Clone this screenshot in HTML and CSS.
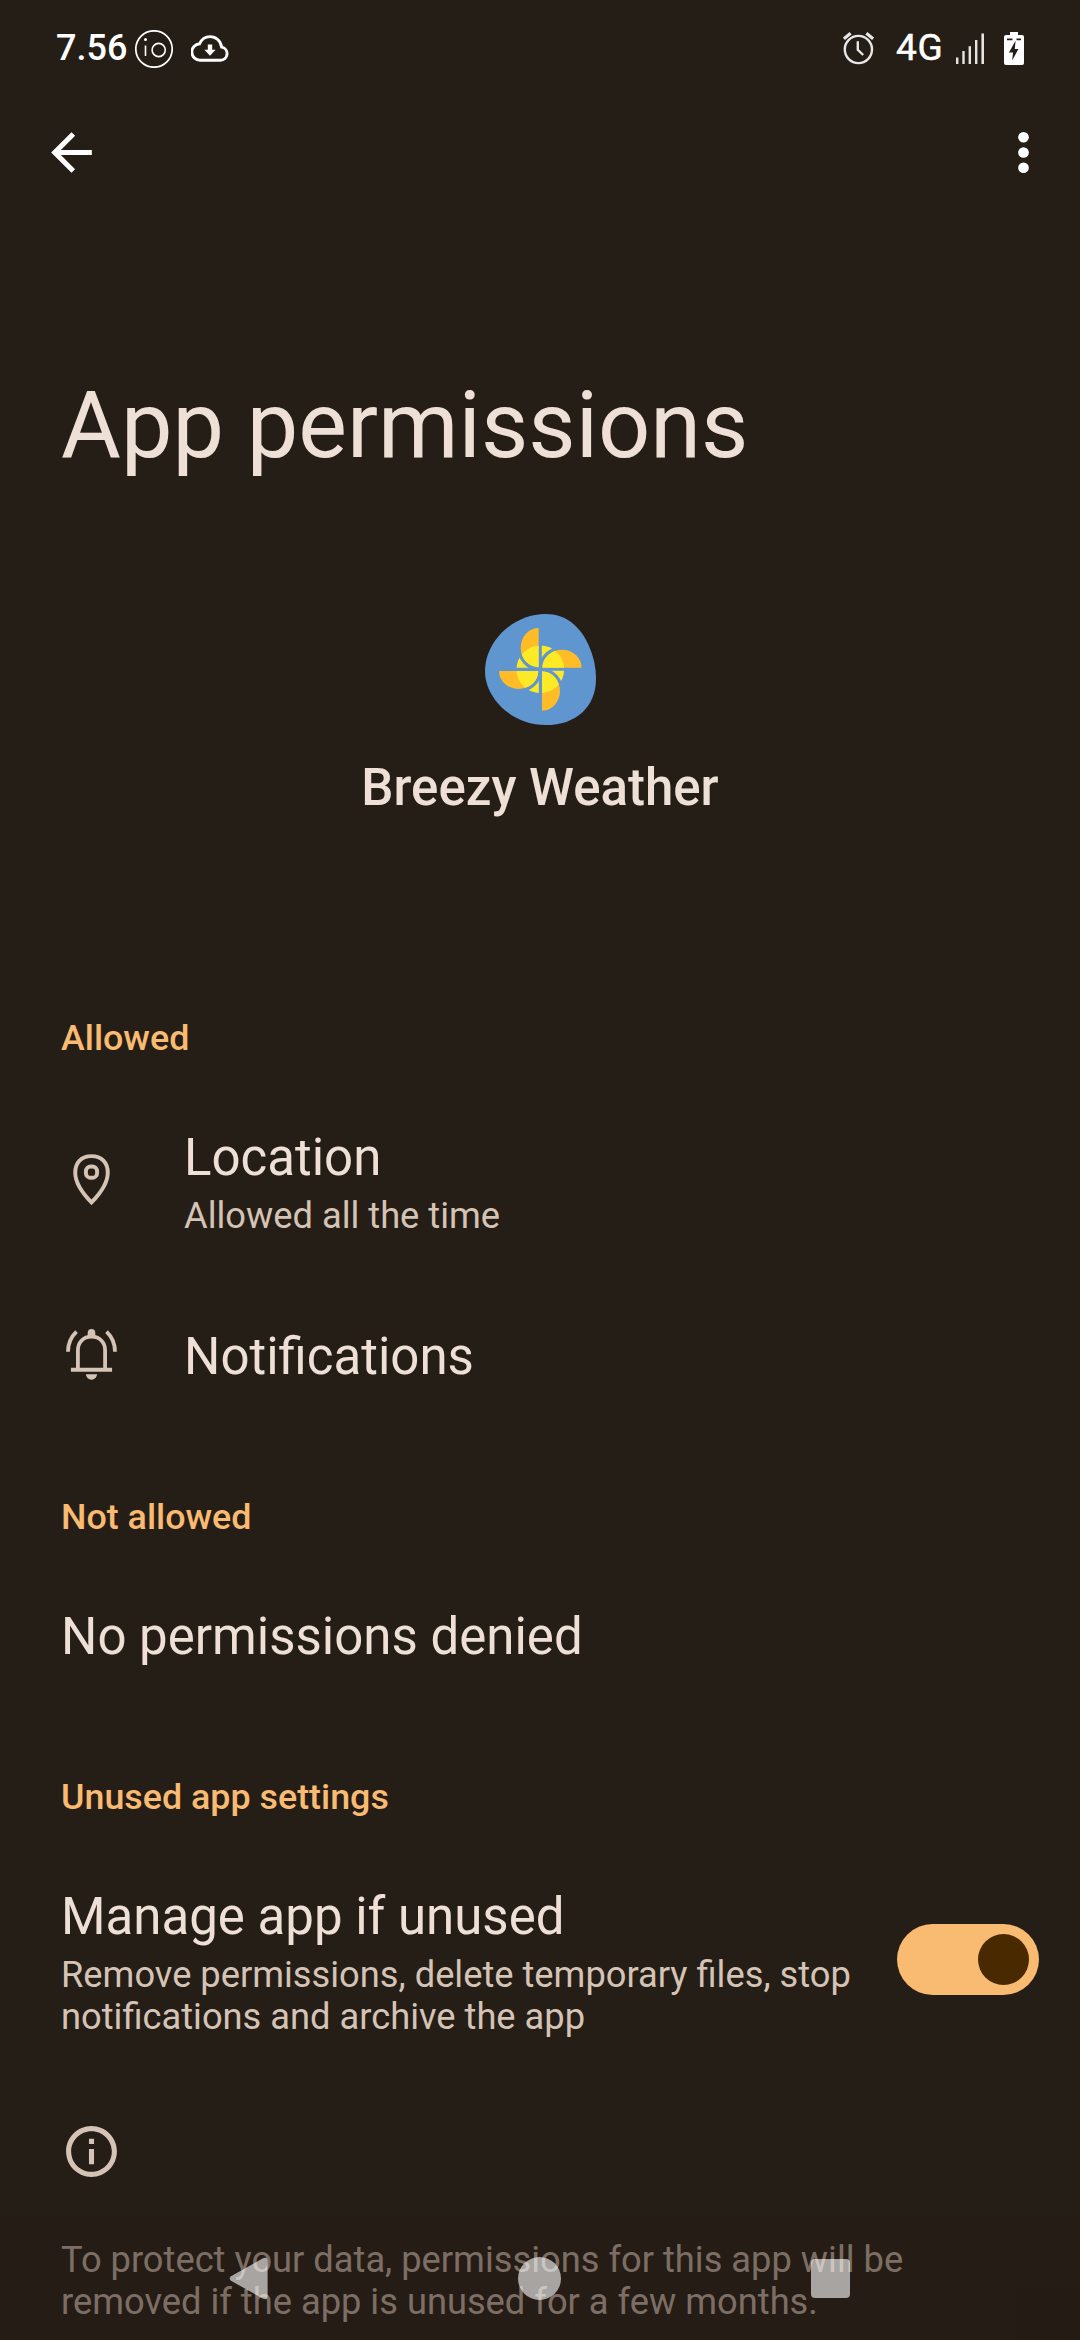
FILE: index.html
```html
<!DOCTYPE html>
<html lang="en">
<head>
    <meta charset="UTF-8">
    <meta name="viewport" content="width=device-width, initial-scale=1.0">
    <title>App permissions</title>
    <link rel="stylesheet" href="styles.css">
</head>
<body>
    <div class="screen">
        <header class="status-bar">
            <div class="status-left">
                <span class="clock">7.56</span>
                <svg class="io-icon" viewBox="0 0 38 38" fill="none" stroke="#fff">
                    <circle cx="19" cy="19" r="18.2" stroke-width="1.7"/>
                    <circle cx="23.7" cy="20" r="6.6" stroke-width="1.6"/>
                    <path d="M10.5 15.5v10.5" stroke-width="1.6"/>
                    <circle cx="10.5" cy="9.6" r="1.5" fill="#fff" stroke="none"/>
                </svg>
                <svg class="cloud-icon" viewBox="0 0 38 27" fill="none" stroke="#fff" stroke-width="2.9">
                    <path d="M9.5 25.2H29.5A6.6 6.6 0 0 0 30.6 12.1C29.8 5.8 24.9 1.6 19 1.6C14.2 1.6 10.5 4.3 8.6 8.8A8.2 8.2 0 0 0 9.5 25.2Z"/>
                    <path d="M16.8 9.5h4.4v5.3h3.4L19 20.8l-5.6-6h3.4z" fill="#fff" stroke="none"/>
                </svg>
            </div>
            <div class="status-right">
                <svg class="alarm-icon" viewBox="0 0 31 33" fill="none" stroke="#e9e7e5">
                    <circle cx="15.4" cy="17.5" r="13.6" stroke-width="2.4"/>
                    <path d="M14.8 9.2v8.6l5.4 5.2" stroke-width="2.4"/>
                    <path d="M0.9 6.8L7.6 1.3M23.4 1.3l6.7 5.5" stroke-width="3.2"/>
                </svg>
                <span class="network">4G</span>
                <svg class="signal-icon" viewBox="0 0 28 31" fill="#e6e3e1">
                    <rect x="0" y="24.5" width="2.4" height="6.5"/>
                    <rect x="6.3" y="18" width="2.4" height="13"/>
                    <rect x="12.6" y="13.2" width="2.4" height="17.8"/>
                    <rect x="19" y="7" width="2.4" height="24"/>
                    <rect x="25.4" y="0.5" width="2.6" height="30.5"/>
                </svg>
                <svg class="battery-icon" viewBox="0 0 20 33">
                    <path d="M6 0h8v3h4a2 2 0 0 1 2 2v26a2 2 0 0 1-2 2H2a2 2 0 0 1-2-2V5a2 2 0 0 1 2-2h4z" fill="#fff"/>
                    <path d="M11.6 8.5L5 20.5h4L8.2 28.5L14.4 17h-3.6zM3 6.5h5.5v1.8H3zM12.5 6.5H17v1.8h-4.5z" fill="#251e17"/>
                </svg>
            </div>
        </header>

        <nav class="toolbar">
            <svg class="back-icon" viewBox="0 0 24 24" fill="#fff">
                <path d="M20 11H7.83l5.59-5.59L12 4l-8 8 8 8 1.41-1.41L7.83 13H20z"/>
            </svg>
            <svg class="more-icon" viewBox="0 0 24 24" fill="#fff">
                <circle cx="12" cy="6" r="2.1"/>
                <circle cx="12" cy="12" r="2.1"/>
                <circle cx="12" cy="18" r="2.1"/>
            </svg>
        </nav>

        <main class="content">
            <h1 class="page-title">App permissions</h1>

            <section class="app-header">
                <svg class="app-logo" viewBox="72 72 333 333">
                    <defs>
                        <path id="blade" d="M233 114A54 59 0 0 0 233 232Z"/>
                        <clipPath id="blades-clip">
                            <use href="#blade"/>
                            <use href="#blade" transform="rotate(90 238 238)"/>
                            <use href="#blade" transform="rotate(180 238 238)"/>
                            <use href="#blade" transform="rotate(270 238 238)"/>
                        </clipPath>
                    </defs>
                    <path fill="#6096d0" d="M253 72C317 72 358 110 384 168C398 200 405 232 405 266C405 352 343 405 255 405C152 405 72 325 72 243C72 153 158 72 253 72Z"/>
                    <circle cx="238" cy="238" r="71.5" fill="#fcea27"/>
                    <g fill="#6096d0" stroke="#6096d0" stroke-width="19">
                        <use href="#blade"/>
                        <use href="#blade" transform="rotate(90 238 238)"/>
                        <use href="#blade" transform="rotate(180 238 238)"/>
                        <use href="#blade" transform="rotate(270 238 238)"/>
                    </g>
                    <g clip-path="url(#blades-clip)">
                        <rect x="100" y="100" width="276" height="276" fill="#ffbc26"/>
                        <circle cx="238" cy="238" r="71.5" fill="#fcea27"/>
                    </g>
                </svg>
                <div class="app-name">Breezy Weather</div>
            </section>

            <h2 class="section-title">Allowed</h2>
            <div class="row">
                <svg class="row-icon" viewBox="0 0 24 24" fill="none" stroke="#d5c3b5" stroke-width="1.55">
                    <path d="M12 21C8.3 17.2 5.6 13.1 5.6 9.3C5.6 5.3 8 2.8 12 2.8S18.4 5.3 18.4 9.3C18.4 13.1 15.7 17.2 12 21Z"/>
                    <rect x="9.8" y="6.9" width="4.4" height="4.4" rx="1.9"/>
                </svg>
                <div class="row-text">
                    <div class="row-title">Location</div>
                    <div class="row-summary">Allowed all the time</div>
                </div>
            </div>
            <div class="row row-next">
                <svg class="row-icon" viewBox="0 0 24 24" fill="none" stroke="#d5c3b5" stroke-width="1.5">
                    <path d="M3.9 18H20.1M6.65 18V10.4C6.65 7.2 8.8 5 12 5S17.35 7.2 17.35 10.4V18"/>
                    <path d="M2.75 10.9C2.75 7.6 4 5 6.1 3M21.25 10.9C21.25 7.6 20 5 17.9 3"/>
                    <path d="M10.5 5V3.5a1.5 1.5 0 0 1 3 0V5zM9.8 19.8h4.4a2.2 2.1 0 0 1-4.4 0z" fill="#d5c3b5" stroke="none"/>
                </svg>
                <div class="row-text">
                    <div class="row-title">Notifications</div>
                </div>
            </div>

            <h2 class="section-title section-next">Not allowed</h2>
            <div class="row">
                <div class="row-title">No permissions denied</div>
            </div>

            <h2 class="section-title section-next">Unused app settings</h2>
            <div class="row">
                <div class="row-text">
                    <div class="row-title">Manage app if unused</div>
                    <div class="row-summary">Remove permissions, delete temporary files, stop<br>notifications and archive the app</div>
                </div>
                <div class="switch">
                    <div class="switch-thumb"></div>
                </div>
            </div>

            <div class="footer-note">
                <svg class="info-icon" viewBox="0 0 24 24" fill="#d5c3b5">
                    <path d="M11 7h2v2h-2zm0 4h2v6h-2zm1-9C6.48 2 2 6.48 2 12s4.48 10 10 10 10-4.48 10-10S17.52 2 12 2zm0 18c-4.41 0-8-3.59-8-8s3.59-8 8-8 8 3.59 8 8-3.59 8-8 8z"/>
                </svg>
                <p class="row-summary">To protect your data, permissions for this app will be<br>removed if the app is unused for a few months.</p>
            </div>
        </main>

        <!-- system navigation, drawn over the scrolling content -->
        <div class="nav-bar">
            <svg class="nav-back" viewBox="0 0 39 43">
                <path d="M34 1.2L2 19.3a2.6 2.6 0 0 0 0 4.4L34 41.8Q38.6 43.5 38.6 39V4Q38.6 -0.5 34 1.2Z" fill="#fff"/>
            </svg>
            <div class="nav-home"></div>
            <div class="nav-recents"></div>
        </div>
    </div>
</body>
</html>
```

FILE: styles.css
```css
:root {
    --bg: #251e17;
    --text: #eee0d6;
    --text-dim: #d5c3b5;
    --accent: #f9ba72;
    --on-accent: #482900;
    --white: #ffffff;
}

* {
    box-sizing: border-box;
}

body {
    margin: 0;
    background-color: var(--bg);
    color: var(--text);
    font-family: Roboto, sans-serif;
}

h1, h2, p {
    margin: 0;
}

svg {
    display: block;
    flex-shrink: 0;
}

.screen {
    position: relative;
    width: 1080px;
    height: 2340px;
    overflow: hidden;
    background-color: var(--bg);
}

/* Status bar */
.status-bar {
    height: 97px;
    padding: 0 56px;
    display: flex;
    justify-content: space-between;
    align-items: center;
    color: var(--white);
    font-size: 36px;
    font-weight: 500;
    line-height: 42px;
}

.status-left,
.status-right {
    display: flex;
    align-items: center;
}

.clock {
    width: 79px;
    margin-top: -1px;
}

.io-icon {
    width: 38px;
    height: 38px;
}

.cloud-icon {
    width: 38px;
    height: 27px;
    margin-left: 18px;
}

.alarm-icon {
    width: 31px;
    height: 33px;
}

.network {
    width: 60px;
    margin: -1px 0 0 22px;
    font-size: 37px;
    font-weight: 400;
    letter-spacing: 0.8px;
    -webkit-text-stroke: 0.5px var(--white);
}

.signal-icon {
    width: 28px;
    height: 31px;
}

.battery-icon {
    width: 20px;
    height: 33px;
    margin-left: 20px;
}

/* Toolbar */
.toolbar {
    height: 111px;
    padding: 0 26px 0 41px;
    display: flex;
    justify-content: space-between;
    align-items: center;
}

.back-icon,
.more-icon {
    width: 61px;
    height: 61px;
}

/* Content */
.content {
    padding: 164px 41px 0 61px;
}

.page-title {
    font-size: 91.8px;
    font-weight: 400;
    line-height: 108px;
}

.app-header {
    display: flex;
    flex-direction: column;
    align-items: center;
    gap: 33px;
    margin: 134px 20px 199px 0;
}

.app-logo {
    width: 111px;
    height: 111px;
}

.app-name {
    font-size: 51px;
    font-weight: 500;
    line-height: 60px;
}

.section-title {
    color: var(--accent);
    font-size: 35.85px;
    font-weight: 500;
    line-height: 42px;
    margin-bottom: 69px;
}

.section-next {
    margin-top: 109px;
}

.row {
    display: flex;
    align-items: center;
}

.row-next {
    margin-top: 90px;
}

.row-icon {
    width: 61px;
    height: 61px;
    margin: -6px 62px 0 0;
}

.row-text {
    flex: 1;
    display: flex;
    flex-direction: column;
    gap: 7px;
}

.row-title {
    font-size: 51px;
    line-height: 60px;
}

.row-summary {
    color: var(--text-dim);
    font-size: 36.27px;
    line-height: 42px;
    white-space: nowrap;
}

.switch {
    width: 142px;
    height: 71px;
    margin-top: -6px;
    padding: 10px;
    border-radius: 36px;
    background-color: var(--accent);
    display: flex;
    justify-content: flex-end;
}

.switch-thumb {
    width: 51px;
    height: 51px;
    border-radius: 50%;
    background-color: var(--on-accent);
}

.footer-note {
    display: flex;
    flex-direction: column;
    gap: 57px;
    margin-top: 83px;
}

.info-icon {
    width: 61px;
    height: 61px;
}

/* System navigation */
.nav-bar {
    position: absolute;
    left: 0;
    right: 0;
    bottom: 0;
    height: 123px;
    padding: 0 230px 0 229px;
    background-color: rgba(35, 25, 20, 0.5);
    display: flex;
    justify-content: space-between;
    align-items: center;
}

.nav-back {
    width: 39px;
    height: 43px;
    opacity: 0.6;
}

.nav-home {
    width: 43px;
    height: 43px;
    border-radius: 50%;
    background-color: rgba(255, 255, 255, 0.6);
}

.nav-recents {
    width: 39px;
    height: 39px;
    border-radius: 4px;
    background-color: rgba(255, 255, 255, 0.6);
}
```
